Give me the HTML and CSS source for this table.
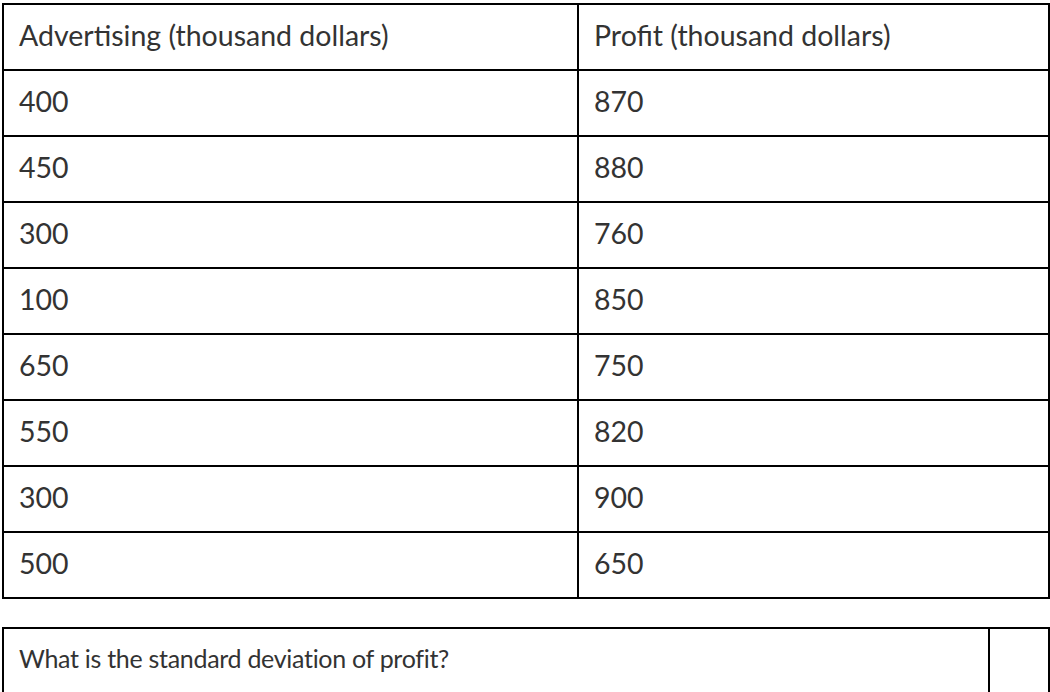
FILE: index.html
```html
<!DOCTYPE html>
<html>
<head>
<meta charset="utf-8">
<link rel="stylesheet" href="styles.css">
</head>
<body>
<div class="page">
  <table class="data">
    <tr><td class="c1">Advertising (thousand dollars)</td><td>Profit (thousand dollars)</td></tr>
    <tr><td class="c1">400</td><td>870</td></tr>
    <tr><td class="c1">450</td><td>880</td></tr>
    <tr><td class="c1">300</td><td>760</td></tr>
    <tr><td class="c1">100</td><td>850</td></tr>
    <tr><td class="c1">650</td><td>750</td></tr>
    <tr><td class="c1">550</td><td>820</td></tr>
    <tr><td class="c1">300</td><td>900</td></tr>
    <tr><td class="c1">500</td><td>650</td></tr>
  </table>
  <table class="question">
    <tr><td class="q">What is the standard deviation of profit?</td><td class="ans"></td></tr>
  </table>
</div>
</body>
</html>
```

FILE: styles.css
```css
html, body {
  margin: 0;
  padding: 0;
  background: #fff;
}
.page {
  padding: 3px 1px 0 2px;
  font-family: Lato, "Liberation Sans", sans-serif;
  color: #333;
}
table {
  border-collapse: collapse;
  width: 1048px;
}
td {
  border: 2px solid #000;
  vertical-align: middle;
  text-align: left;
}
.data td {
  font-size: 28.5px;
  height: 59px;
  padding: 0 17px 5px 15px;
}
.data td.c1 {
  width: 541px;
}
.question {
  margin-top: 28px;
}
.question td {
  font-size: 25px;
  letter-spacing: -0.3px;
  height: 60px;
  padding: 14px 17px 20px 15px;
  vertical-align: top;
}
.question td.ans {
  width: 26px;
}
```
